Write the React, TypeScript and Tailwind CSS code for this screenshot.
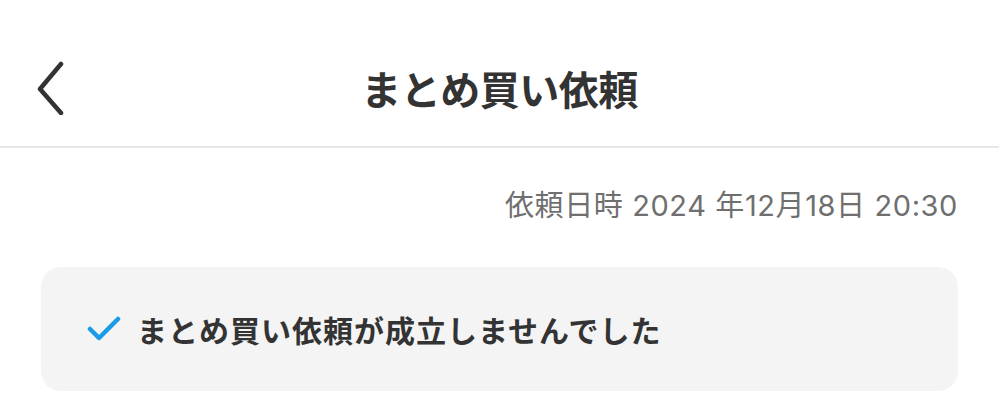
import React from 'react';

const font = { fontFamily: '"Noto Sans CJK JP", "Noto Sans", sans-serif' };
const dateFont = { fontFamily: 'Inter, "Noto Sans CJK JP", sans-serif' };

export default function App() {
  return (
    <div className="w-[999px] h-[412px] bg-white overflow-hidden" style={font}>
      <header className="h-[148px] border-b-2 border-[#e6e6e6] flex items-center relative">
        <button className="absolute left-[30px] top-[57px] w-[40px] h-[60px] flex items-center justify-center">
          <svg width="34" height="56" viewBox="0 0 34 56" fill="none">
            <path d="M28 5 L7 30 L28 54" stroke="#333333" strokeWidth="4.5" strokeLinecap="round" strokeLinejoin="round" />
          </svg>
        </button>
        <h1 className="w-full text-center text-[40px] leading-none font-bold text-[#333333] mt-[30px] tracking-[-0.5px]">
          まとめ買い依頼
        </h1>
      </header>

      <div className="px-[41px]">
        <p className="text-right text-[29px] leading-none text-[#6f6f6f] mt-[43px] tracking-[0.6px]" style={dateFont}>
          依頼日時 2024 年12月18日 20:30
        </p>

        <div className="mt-[47px] h-[124px] rounded-[20px] bg-[#f4f4f4] flex items-center pl-[46px] gap-[16px]">
          <svg width="34" height="26" viewBox="0 0 34 26" fill="none">
            <path d="M3 13 L12 22 L31 3" stroke="#1a9be8" strokeWidth="4.5" strokeLinecap="round" strokeLinejoin="round" />
          </svg>
          <span className="text-[30px] leading-none font-bold text-[#333333] tracking-[1px]">
            まとめ買い依頼が成立しませんでした
          </span>
        </div>
      </div>
    </div>
  );
}
